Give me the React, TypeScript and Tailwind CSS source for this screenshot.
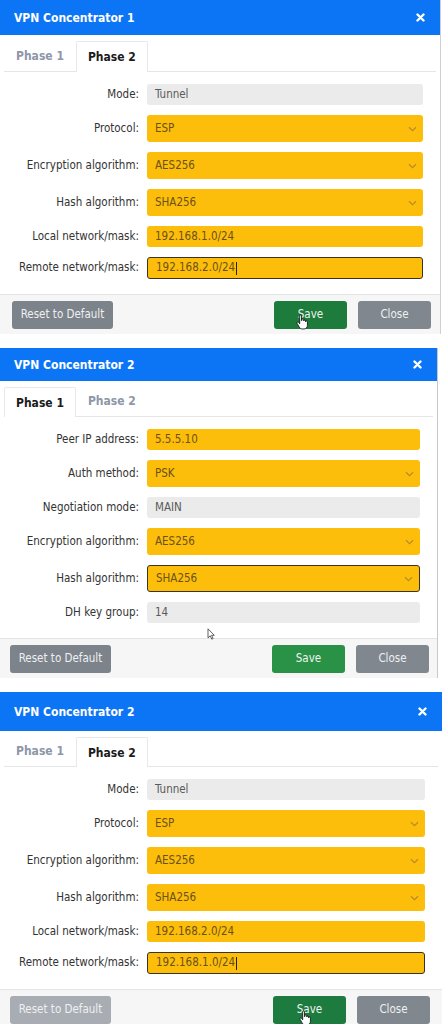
import React from 'react';

type Kind = 'select' | 'input' | 'readonly';

interface Field {
  label: string;
  value: string;
  kind: Kind;
  focused?: boolean;
  caret?: boolean;
}

interface PanelProps {
  title: string;
  active: 1 | 2;
  fields: Field[];
  headerClass: string;
  tabClass: string;
  footerClass: string;
  widthClass: string;
  resetClass: string;
  saveClass: string;
  cursor?: 'hand' | 'arrow';
  cursorClass?: string;
}

const FONT = "'DejaVu Sans Condensed', 'Liberation Sans', Arial, sans-serif";

const phase2Fields = (local: string, remote: string): Field[] => [
  { label: 'Mode:', value: 'Tunnel', kind: 'readonly' },
  { label: 'Protocol:', value: 'ESP', kind: 'select' },
  { label: 'Encryption algorithm:', value: 'AES256', kind: 'select' },
  { label: 'Hash algorithm:', value: 'SHA256', kind: 'select' },
  { label: 'Local network/mask:', value: local, kind: 'input' },
  { label: 'Remote network/mask:', value: remote, kind: 'input', focused: true, caret: true },
];

const phase1Fields: Field[] = [
  { label: 'Peer IP address:', value: '5.5.5.10', kind: 'input' },
  { label: 'Auth method:', value: 'PSK', kind: 'select' },
  { label: 'Negotiation mode:', value: 'MAIN', kind: 'readonly' },
  { label: 'Encryption algorithm:', value: 'AES256', kind: 'select' },
  { label: 'Hash algorithm:', value: 'SHA256', kind: 'select', focused: true },
  { label: 'DH key group:', value: '14', kind: 'readonly' },
];

function CloseX() {
  return (
    <svg width="9" height="9" viewBox="0 0 9 9" className="block">
      <path d="M1.5 1.5 L7.5 7.5 M7.5 1.5 L1.5 7.5" stroke="white" strokeWidth="2.4" strokeLinecap="round" />
    </svg>
  );
}

function Chevron() {
  return (
    <svg width="9" height="6" viewBox="0 0 9 6" className="block">
      <path d="M1 1.2 L4.5 4.6 L8 1.2" fill="none" stroke="#b98a2a" strokeWidth="1.2" />
    </svg>
  );
}

function HandCursor() {
  return (
    <svg width="12" height="16" viewBox="0 0 13 17" className="block">
      <path
        d="M4 1.8a1 1 0 0 1 2 0V7h.4V6a1 1 0 0 1 2 0v1.4a1 1 0 0 1 2 0v.9a1 1 0 0 1 2 0V12c0 2.2-1.5 4-3.6 4H6.6c-1.4 0-2.300-.8-3.2-2.2L1.2 10a1 1 0 0 1 1.7-1.1L4 10.4Z"
        fill="white"
        stroke="#111"
        strokeWidth="0.9"
        strokeLinejoin="round"
      />
    </svg>
  );
}

function ArrowCursor() {
  return (
    <svg width="8" height="12" viewBox="0 0 9 14" className="block">
      <path d="M1 1 L1 11.5 L3.6 9.1 L5.4 13 L7 12.3 L5.2 8.5 L8.4 8.5 Z" fill="white" stroke="#333" strokeWidth="0.9" strokeLinejoin="round" />
    </svg>
  );
}

function FieldBox({ field }: { field: Field }) {
  const base = 'flex items-center rounded-[3px] pl-[8px] pr-[6px] text-[11.5px]';
  if (field.kind === 'readonly') {
    return (
      <div className={`${base} h-[21px] bg-[#ebebeb] text-[#5a5a5a]`}>{field.value}</div>
    );
  }
  const border = field.focused ? 'border-[1.5px] border-[#3b3322]' : '';
  const h = field.kind === 'select' ? 'h-[27px]' : field.focused ? 'h-[22px]' : 'h-[21px]';
  return (
    <div className={`${base} ${h} ${border} bg-[#fdbd0b] text-[#6a5217] justify-between`}>
      <span className="flex items-center">
        {field.value}
        {field.caret && <span className="ml-px inline-block h-[13px] w-px bg-[#222]" />}
      </span>
      {field.kind === 'select' && <Chevron />}
    </div>
  );
}

function Panel(p: PanelProps) {
  return (
    <div className={`${p.widthClass} bg-white`} style={{ fontFamily: FONT }}>
      <div className={`${p.headerClass} flex items-center justify-between bg-[#0c75f6] pl-[14px] pr-[15px]`}>
        <span className="text-[12px] font-bold text-white">{p.title}</span>
        <CloseX />
      </div>

      <div className={`${p.tabClass} mx-[4px] flex items-end border-b border-[#e6e6e6] pt-[5px]`}>
        {[1, 2].map((n) => (
          <div
            key={n}
            className={`flex h-full items-center px-[11px] text-[12px] font-bold ${
              p.active === n
                ? 'rounded-t-[2px] border-x border-t border-[#e8e8e8] bg-white text-[#1b1b1b] -mb-px'
                : 'border border-transparent text-[#8e96a8]'
            }`}
          >
            Phase {n}
          </div>
        ))}
      </div>

      <div className="grid grid-cols-[139px_1fr] items-center gap-x-[8px] gap-y-[10px] pr-[17px] pt-[12px] pb-[15px]">
        {p.fields.map((f) => (
          <React.Fragment key={f.label}>
            <div className="text-right text-[11.5px] text-[#333]">{f.label}</div>
            <FieldBox field={f} />
          </React.Fragment>
        ))}
      </div>

      <div className={`${p.footerClass} flex items-start justify-between border-t border-[#e4e4e4] bg-[#f6f6f6] pt-[6px] pb-[5px]`}>
        <button className={`${p.resetClass} h-[28px] w-[101px] rounded-[3px] text-[11.5px] text-[#eef0f2]`}>
          Reset to Default
        </button>
        <div className="flex gap-[11px]">
          <button className={`${p.saveClass} relative h-[28px] w-[73px] rounded-[3px] text-[11.5px] text-[#eef5ef]`}>
            Save
            {p.cursor && (
              <span className={`absolute ${p.cursorClass}`}>
                {p.cursor === 'hand' ? <HandCursor /> : <ArrowCursor />}
              </span>
            )}
          </button>
          <button className="h-[28px] w-[73px] rounded-[3px] bg-[#81878e] text-[11.5px] text-[#eef0f2]">Close</button>
        </div>
      </div>
    </div>
  );
}

export default function App() {
  return (
    <div className="w-[444px] overflow-hidden bg-white">
      <Panel
        title="VPN Concentrator 1"
        active={2}
        fields={phase2Fields('192.168.1.0/24', '192.168.2.0/24')}
        headerClass="h-[35px]"
        tabClass="h-[37px]"
        footerClass="pl-[12px] pr-[9px]"
        widthClass="w-[441px] border-r border-[#d0d0d0]"
        resetClass="bg-[#7c838a]"
        saveClass="bg-[#1d7b3c]"
        cursor="hand"
        cursorClass="left-[22px] top-[13px]"
      />
      <div className="h-[14px]" />
      <Panel
        title="VPN Concentrator 2"
        active={1}
        fields={phase1Fields}
        headerClass="h-[33px]"
        tabClass="h-[36px]"
        footerClass="pl-[10px] pr-[8px]"
        widthClass="w-[438px] border-r border-[#c8c8c8]"
        resetClass="bg-[#7c838a]"
        saveClass="bg-[#2a9247]"
      />
      <div className="relative h-[14px]">
        <span className="absolute left-[207px] top-[-50px]">
          <ArrowCursor />
        </span>
      </div>
      <Panel
        title="VPN Concentrator 2"
        active={2}
        fields={phase2Fields('192.168.2.0/24', '192.168.1.0/24')}
        headerClass="h-[39px]"
        tabClass="h-[36px]"
        footerClass="pl-[10px] pr-[12px]"
        widthClass="w-[442px]"
        resetClass="bg-[#a8adb3]"
        saveClass="bg-[#1d7b3f]"
        cursor="hand"
        cursorClass="left-[26px] top-[14px]"
      />
    </div>
  );
}
